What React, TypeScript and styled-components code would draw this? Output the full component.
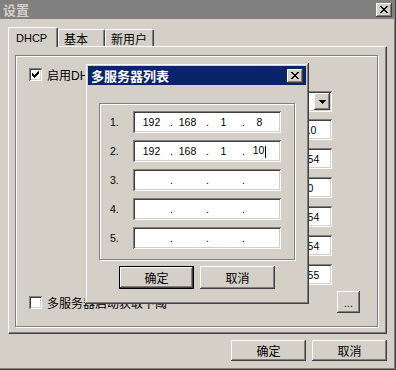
import React from 'react';
import styled, { createGlobalStyle, css } from 'styled-components';

const GlobalStyle = createGlobalStyle`
  html, body {
    margin: 0;
    padding: 0;
    background: #d4d0c8;
  }
  body {
    font-family: "Liberation Sans", "Noto Sans CJK SC", sans-serif;
    font-size: 12px;
    color: #000;
  }
`;

// classic 3d edges
const raised = css`
  box-shadow: inset -1px -1px #404040, inset 1px 1px #fff, inset -2px -2px #808080, inset 2px 2px #d4d0c8;
`;
const sunken = css`
  box-shadow: inset 1px 1px #808080, inset -1px -1px #fff, inset 2px 2px #404040, inset -2px -2px #d4d0c8;
`;
const frame = css`
  box-shadow: inset -1px -1px #404040, inset 1px 1px #d4d0c8, inset -2px -2px #808080, inset 2px 2px #fff;
`;

const Window = styled.div`
  position: relative;
  width: 396px;
  height: 370px;
  box-sizing: border-box;
  background: #d4d0c8;
  border-right: 1px solid #404040;
  border-bottom: 1px solid #404040;
  box-shadow: inset -1px -1px #808080;
  display: flex;
  flex-direction: column;
  overflow: hidden;
`;

const TitleBar = styled.div<{ $active?: boolean }>`
  flex: none;
  height: 19px;
  display: flex;
  align-items: center;
  justify-content: space-between;
  padding: 0 3px;
  background: ${(p) => (p.$active ? '#0a246a' : '#808080')};
  color: ${(p) => (p.$active ? '#fff' : '#d4d0c8')};
`;

const TitleText = styled.span`
  font-family: "Noto Sans CJK SC", sans-serif;
  font-weight: bold;
  font-size: 13px;
  line-height: 19px;
`;

const CaptionButton = styled.div`
  width: 16px;
  height: 14px;
  box-sizing: border-box;
  background: #d4d0c8;
  ${raised};
  display: flex;
  align-items: center;
  justify-content: center;
  padding-bottom: 1px;
`;

const Body = styled.div`
  flex: 1;
  display: flex;
  flex-direction: column;
  padding: 0 8px;
`;

const TabStrip = styled.div`
  display: flex;
  align-items: flex-end;
  height: 19px;
  margin-top: 8px;
  position: relative;
  z-index: 1;
`;

const Tab = styled.div<{ $active?: boolean; $w: number; $latin?: boolean }>`
  box-sizing: border-box;
  width: ${(p) => p.$w}px;
  height: ${(p) => (p.$active ? 20 : 17)}px;
  margin-bottom: ${(p) => (p.$active ? -1 : 0)}px;
  background: #d4d0c8;
  border-top: 1px solid #fff;
  border-left: 1px solid #fff;
  border-right: 1px solid #404040;
  border-radius: 2px 2px 0 0;
  box-shadow: inset -1px 0 #808080;
  display: flex;
  align-items: center;
  padding-left: ${(p) => (p.$active ? 7 : 5)}px;
  font-size: ${(p) => (p.$latin ? 11 : 12)}px;
`;

const Panel = styled.div`
  box-sizing: border-box;
  width: 379px;
  height: 288px;
  border-top: 1px solid #fff;
  border-left: 1px solid #fff;
  border-right: 1px solid #404040;
  border-bottom: 1px solid #404040;
  box-shadow: inset -1px -1px #808080;
  padding: 8px 8px 6px 6px;
`;

const Group = styled.div`
  box-sizing: border-box;
  height: 100%;
  border: 1px solid #808080;
  box-shadow: inset 1px 1px #fff, 1px 1px #fff;
  padding: 11px 17px 0 13px;
  display: flex;
  flex-direction: column;
`;

const CheckRow = styled.label`
  display: flex;
  align-items: center;
  height: 14px;
  white-space: nowrap;
`;

const Box = styled.span`
  flex: none;
  width: 13px;
  height: 13px;
  box-sizing: border-box;
  background: #fff;
  ${sunken};
  display: flex;
  align-items: center;
  justify-content: center;
`;

const CheckText = styled.span`
  margin-left: 5px;
  font-size: 12px;
`;

const Fields = styled.div`
  margin-left: 58px;
  padding-right: 28px;
`;

const FieldRow = styled.div<{ $mt: number }>`
  display: grid;
  grid-template-columns: 1fr 148px;
  column-gap: 5px;
  align-items: center;
  height: 21px;
  margin-top: ${(p) => p.$mt}px;
`;

const FieldLabel = styled.span`
  font-size: 12px;
  white-space: nowrap;
`;

const Combo = styled.div`
  box-sizing: border-box;
  height: 21px;
  background: #fff;
  ${sunken};
  display: flex;
  align-items: center;
  padding: 2px;
`;

const ComboText = styled.span`
  flex: 1;
  padding-left: 2px;
  font-size: 12px;
`;

const ComboButton = styled.div`
  width: 16px;
  height: 17px;
  box-sizing: border-box;
  background: #d4d0c8;
  ${raised};
  display: flex;
  align-items: center;
  justify-content: center;
`;

const IpBox = styled.div<{ $h: number }>`
  box-sizing: border-box;
  width: 148px;
  height: ${(p) => p.$h}px;
  background: #fff;
  ${sunken};
  display: flex;
  align-items: center;
  padding-left: 4px;
  font-family: "Liberation Sans", sans-serif;
  font-size: 10.5px;
`;

const Octet = styled.span`
  flex: none;
  width: 29px;
  text-align: center;
  white-space: nowrap;
`;

const Dot = styled.span`
  flex: none;
  width: 7px;
  text-align: right;
`;

const Caret = styled.span`
  display: inline-block;
  width: 1px;
  height: 12px;
  background: #000;
  vertical-align: middle;
  margin-left: 1px;
`;

const BottomRow = styled.div`
  display: grid;
  grid-template-columns: 1fr 23px;
  column-gap: 5px;
  align-items: center;
  height: 22px;
  margin-top: 6px;
`;

const Button = styled.div<{ $w: number; $h: number; $default?: boolean }>`
  box-sizing: border-box;
  width: ${(p) => p.$w}px;
  height: ${(p) => p.$h}px;
  background: #d4d0c8;
  ${(p) =>
    p.$default
      ? css`
          box-shadow: inset 0 0 0 1px #000, inset -2px -2px #404040, inset 2px 2px #fff, inset -3px -3px #808080;
        `
      : raised};
  display: flex;
  align-items: center;
  justify-content: center;
  font-size: 12px;
`;

const Dots = styled.span`
  font-family: "Liberation Sans", sans-serif;
  font-size: 11px;
  padding-top: 2px;
`;

const ButtonRow = styled.div<{ $center?: boolean }>`
  display: flex;
  justify-content: ${(p) => (p.$center ? 'center' : 'flex-end')};
  gap: 6px;
  margin-top: 6px;
`;

const Dialog = styled.div`
  position: absolute;
  left: 85px;
  top: 63px;
  width: 224px;
  box-sizing: border-box;
  padding: 3px 3px 15px;
  background: #d4d0c8;
  ${frame};
  display: flex;
  flex-direction: column;
  z-index: 5;
`;

const DialogGroup = styled.div`
  box-sizing: border-box;
  margin: 18px 11px 0;
  height: 157px;
  border: 1px solid #808080;
  box-shadow: inset 1px 1px #fff, 1px 1px #fff;
  padding: 7px 0 0 10px;
`;

const ServerRow = styled.div<{ $first?: boolean }>`
  display: grid;
  grid-template-columns: 23px 148px;
  align-items: center;
  height: 22px;
  margin-top: ${(p) => (p.$first ? 0 : 7)}px;
`;

const RowNo = styled.span`
  font-family: "Liberation Sans", sans-serif;
  font-size: 10.5px;
`;

const CloseGlyph = () => (
  <svg width="8" height="7" viewBox="0 0 8 7" shapeRendering="crispEdges">
    <path
      d="M0 0h2v1H0zM6 0h2v1H6zM1 1h2v1H1zM5 1h2v1H5zM2 2h4v1H2zM3 3h2v1H3zM2 4h4v1H2zM1 5h2v1H1zM5 5h2v1H5zM0 6h2v1H0zM6 6h2v1H6z"
      fill="#000"
    />
  </svg>
);

const ArrowGlyph = () => (
  <svg width="7" height="4" viewBox="0 0 7 4" shapeRendering="crispEdges">
    <path d="M0 0h7v1H0zM1 1h5v1H1zM2 2h3v1H2zM3 3h1v1H3z" fill="#000" />
  </svg>
);

const CheckGlyph = () => (
  <svg width="7" height="7" viewBox="0 0 7 7" shapeRendering="crispEdges">
    <path
      d="M6 0h1v1H6zM5 1h2v1H5zM0 2h1v1H0zM4 2h3v1H4zM0 3h2v1H0zM3 3h3v1H3zM0 4h5v1H0zM1 5h3v1H1zM2 6h1v1H2z"
      fill="#000"
    />
  </svg>
);

const CheckBox = ({ checked }: { checked?: boolean }) => <Box>{checked && <CheckGlyph />}</Box>;

const IpField = ({ value, h, caret }: { value: string; h: number; caret?: boolean }) => {
  const parts = value ? value.split('.') : ['', '', '', ''];
  return (
    <IpBox $h={h}>
      {parts.map((part, i) => (
        <React.Fragment key={i}>
          {i > 0 && <Dot>.</Dot>}
          <Octet>
            {part}
            {caret && i === 3 && <Caret />}
          </Octet>
        </React.Fragment>
      ))}
    </IpBox>
  );
};

const tabs = [
  { title: 'DHCP', w: 50, latin: true },
  { title: '基本', w: 47 },
  { title: '新用户', w: 49 },
];

const ipRows = [
  { label: '起始地址:', value: '192.168.1.10' },
  { label: '结束地址:', value: '192.168.1.254' },
  { label: '子网掩码:', value: '255.255.255.0' },
  { label: '默认网关:', value: '192.168.1.254' },
  { label: 'DNS服务器:', value: '192.168.1.254' },
  { label: '广播地址:', value: '192.168.1.255' },
];

const servers = ['192.168.1.8', '192.168.1.10', '', '', ''];

export default function App() {
  return (
    <>
      <GlobalStyle />
      <Window>
        <TitleBar>
          <TitleText>设置</TitleText>
          <CaptionButton>
            <CloseGlyph />
          </CaptionButton>
        </TitleBar>
        <Body>
          <TabStrip>
            {tabs.map((t, i) => (
              <Tab key={t.title} $w={t.w} $active={i === 0} $latin={t.latin}>
                {t.title}
              </Tab>
            ))}
          </TabStrip>
          <Panel>
            <Group>
              <CheckRow>
                <CheckBox checked />
                <CheckText>启用DHCP服务器</CheckText>
              </CheckRow>
              <Fields>
                <FieldRow $mt={10}>
                  <FieldLabel>网络接口:</FieldLabel>
                  <Combo>
                    <ComboText>本地连接</ComboText>
                    <ComboButton>
                      <ArrowGlyph />
                    </ComboButton>
                  </Combo>
                </FieldRow>
                {ipRows.map((r, i) => (
                  <FieldRow key={r.label} $mt={i === 0 ? 7 : 8}>
                    <FieldLabel>{r.label}</FieldLabel>
                    <IpField value={r.value} h={21} />
                  </FieldRow>
                ))}
              </Fields>
              <BottomRow>
                <CheckRow>
                  <CheckBox />
                  <CheckText>多服务器启动获取下阈</CheckText>
                </CheckRow>
                <Button $w={23} $h={22}>
                  <Dots>...</Dots>
                </Button>
              </BottomRow>
            </Group>
          </Panel>
          <ButtonRow>
            <Button $w={75} $h={21}>确定</Button>
            <Button $w={75} $h={21}>取消</Button>
          </ButtonRow>
        </Body>

        <Dialog>
          <TitleBar $active>
            <TitleText>多服务器列表</TitleText>
            <CaptionButton>
              <CloseGlyph />
            </CaptionButton>
          </TitleBar>
          <DialogGroup>
            {servers.map((s, i) => (
              <ServerRow key={i} $first={i === 0}>
                <RowNo>{i + 1}.</RowNo>
                <IpField value={s} h={22} caret={i === 1} />
              </ServerRow>
            ))}
          </DialogGroup>
          <ButtonRow $center>
            <Button $w={75} $h={23} $default>确定</Button>
            <Button $w={75} $h={23}>取消</Button>
          </ButtonRow>
        </Dialog>
      </Window>
    </>
  );
}
